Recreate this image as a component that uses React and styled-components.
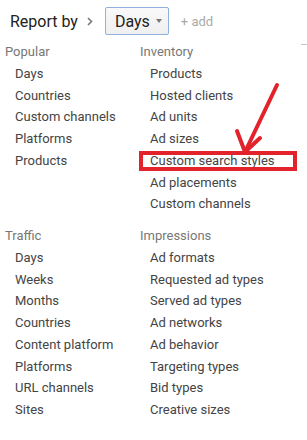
import React from "react";
import styled, { createGlobalStyle } from "styled-components";

const Global = createGlobalStyle`
  html, body { margin: 0; padding: 0; background: #fff; }
  body { font-family: Roboto, "Noto Sans", Arial, sans-serif; -webkit-font-smoothing: antialiased; }
`;

const Page = styled.div`
  position: relative;
  width: 307px;
  height: 440px;
  overflow: hidden;
  background: #fff;
`;

const TopBar = styled.div`
  display: flex;
  align-items: center;
  height: 28px;
  padding: 7px 0 0 10px;
  margin-bottom: 6px;
`;

const Title = styled.span`
  font-size: 16px;
  color: #222;
  letter-spacing: 0;
`;

const Chevron = styled.svg`
  margin: 0 12px 0 9px;
  flex: none;
`;

const DimButton = styled.button`
  display: flex;
  align-items: center;
  height: 28px;
  box-sizing: border-box;
  padding: 0 6px 0 9px;
  border: 1px solid #8fb1dc;
  border-radius: 2px;
  background: linear-gradient(#f9f9f9, #efefef);
  font-family: inherit;
  font-size: 16px;
  color: #222;
  cursor: pointer;
`;

const Caret = styled.span`
  margin-left: 6px;
  width: 0;
  height: 0;
  border-left: 3.5px solid transparent;
  border-right: 3.5px solid transparent;
  border-top: 4px solid #777;
`;

const AddLink = styled.span`
  margin-left: 12px;
  font-size: 13px;
  color: #aaa;
`;

const Menu = styled.div`
  position: relative;
  display: flex;
  flex-direction: column;
  gap: 10px;
  padding-left: 5px;
`;

const Group = styled.div`
  display: grid;
  grid-template-columns: 135px 1fr;
`;

const Column = styled.ul`
  list-style: none;
  margin: 0;
  padding: 0;
  font-size: 13px;
  line-height: 21.75px;
`;

const Heading = styled.li`
  color: #777;
`;

const Item = styled.li`
  position: relative;
  padding-left: 10px;
  color: #444;
  white-space: nowrap;
  ${(p) =>
    p.$marked &&
    `
    &::after {
      content: "";
      position: absolute;
      left: -1px;
      top: 1px;
      width: 158px;
      height: 20px;
      box-sizing: border-box;
      border: 4px solid #e3232b;
    }
  `}
`;

const EdgeStub = styled.span`
  position: absolute;
  right: 0;
  top: 3px;
  width: 6px;
  height: 1px;
  background: #c8c8c8;
`;

const Arrow = styled.svg`
  position: absolute;
  left: 0;
  top: 0;
  pointer-events: none;
`;

const groups = [
  [
    { title: "Popular", items: ["Days", "Countries", "Custom channels", "Platforms", "Products"] },
    {
      title: "Inventory",
      items: ["Products", "Hosted clients", "Ad units", "Ad sizes", "Custom search styles", "Ad placements", "Custom channels"],
      marked: "Custom search styles",
    },
  ],
  [
    {
      title: "Traffic",
      items: ["Days", "Weeks", "Months", "Countries", "Content platform", "Platforms", "URL channels", "Sites"],
    },
    {
      title: "Impressions",
      items: ["Ad formats", "Requested ad types", "Served ad types", "Ad networks", "Ad behavior", "Targeting types", "Bid types", "Creative sizes"],
    },
  ],
];

export default function App() {
  return (
    <Page>
      <Global />
      <TopBar>
        <Title>Report by</Title>
        <Chevron width="6" height="9" viewBox="0 0 6 9">
          <path d="M1 1 L4.5 4.5 L1 8" fill="none" stroke="#777" strokeWidth="1.6" />
        </Chevron>
        <DimButton>
          Days
          <Caret />
        </DimButton>
        <AddLink>+ add</AddLink>
      </TopBar>
      <Menu>
        <EdgeStub />
        {groups.map((g, gi) => (
          <Group key={gi}>
            {g.map((col) => (
              <Column key={col.title}>
                <Heading>{col.title}</Heading>
                {col.items.map((it) => (
                  <Item key={it} $marked={col.marked === it}>
                    {it}
                  </Item>
                ))}
              </Column>
            ))}
          </Group>
        ))}
      </Menu>
      <Arrow width="307" height="440" viewBox="0 0 307 440">
        <g fill="none" stroke="#e3232b" strokeWidth="4" strokeLinecap="round" strokeLinejoin="round">
          <path d="M277 85 L245 152" />
          <path d="M237 131 L245 152 L260 138" />
        </g>
      </Arrow>
    </Page>
  );
}
